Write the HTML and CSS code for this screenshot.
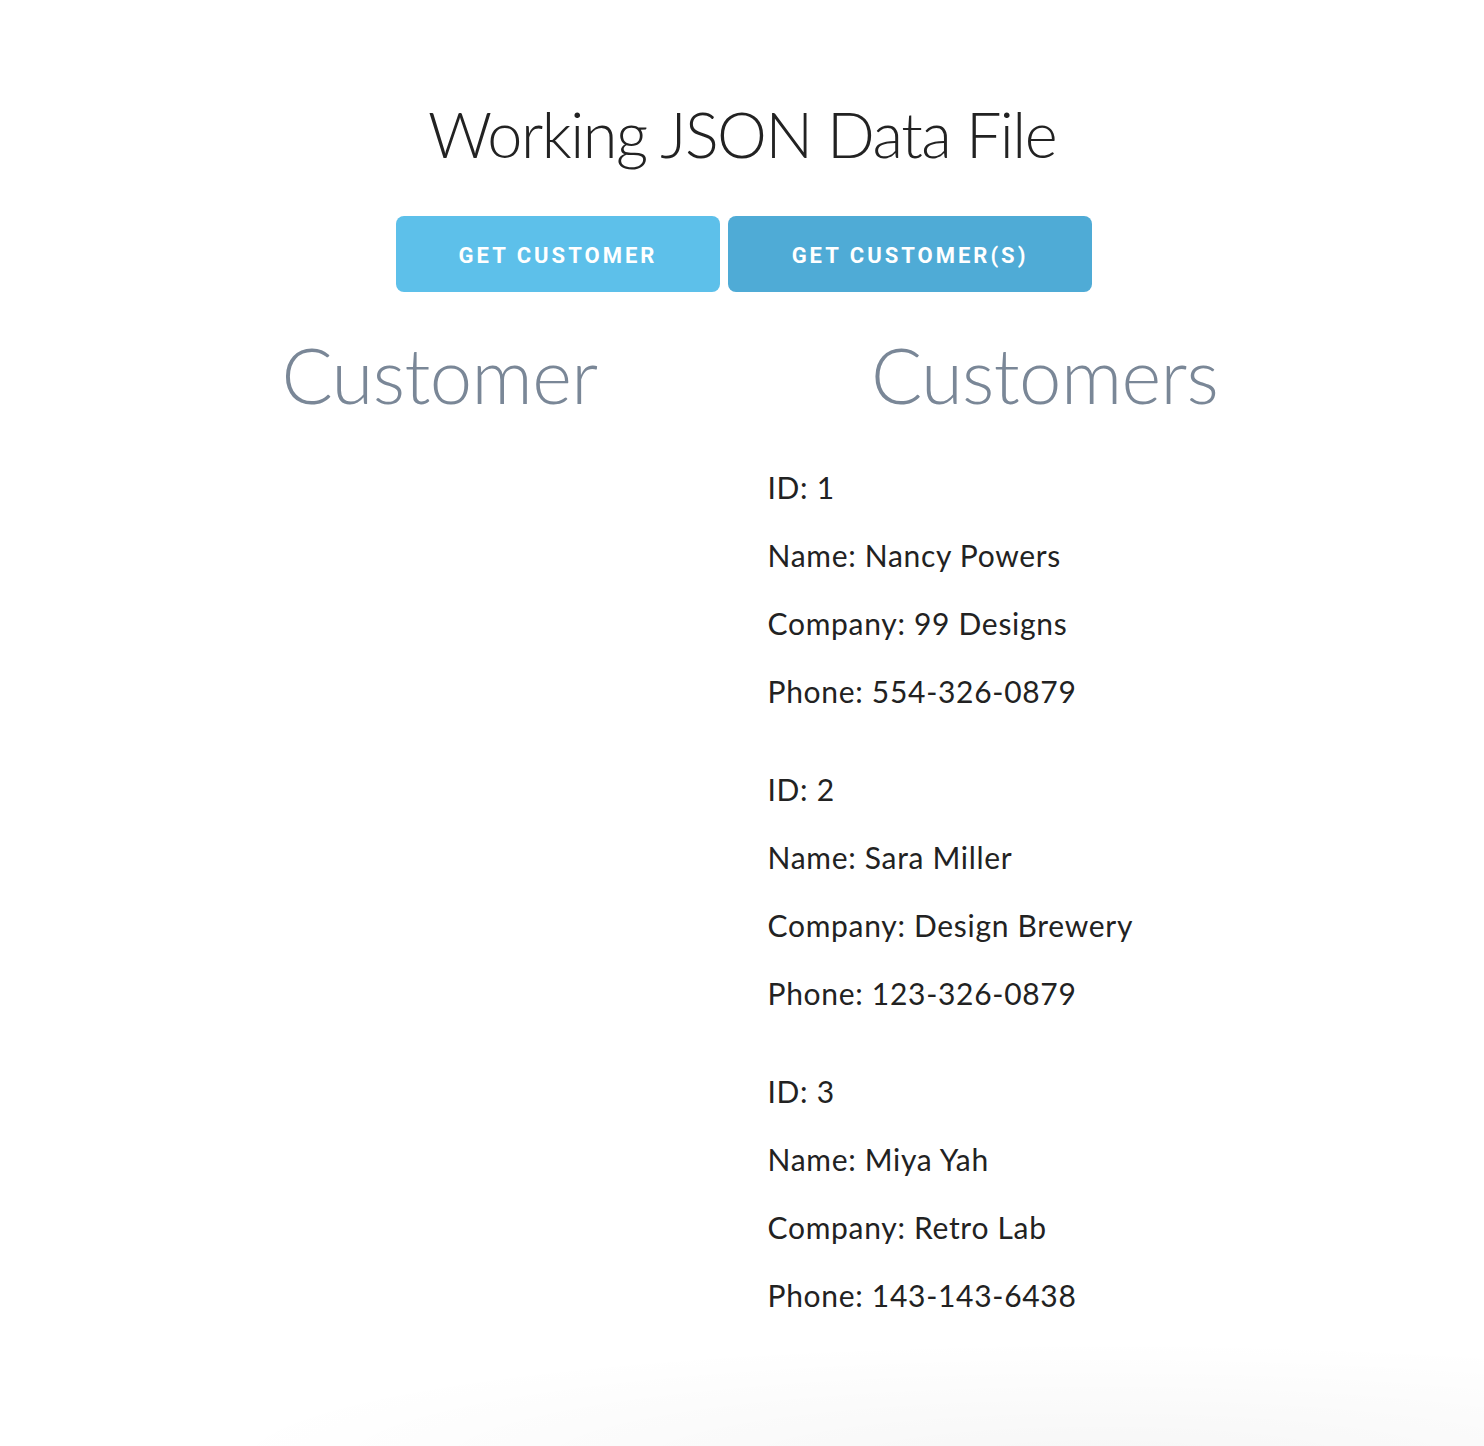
FILE: index.html
```html
<!DOCTYPE html>
<html lang="en">
<head>
    <meta charset="UTF-8">
    <meta name="viewport" content="width=device-width, initial-scale=1.0">
    <title>Working JSON Data File</title>
    <link rel="stylesheet" href="styles.css">
</head>
<body>
    <div class="container">
        <h1>Working JSON Data File</h1>
        <div class="buttons">
            <button id="button1" class="button button-one">Get Customer</button>
            <button id="button2" class="button button-two">Get Customer(s)</button>
        </div>
        <div class="row">
            <div class="column">
                <h2>Customer</h2>
                <div id="customer"></div>
            </div>
            <div class="column">
                <h2>Customers</h2>
                <div id="customers">
                    <ul class="customer-list">
                        <li>ID: 1</li>
                        <li>Name: Nancy Powers</li>
                        <li>Company: 99 Designs</li>
                        <li>Phone: 554-326-0879</li>
                    </ul>
                    <ul class="customer-list">
                        <li>ID: 2</li>
                        <li>Name: Sara Miller</li>
                        <li>Company: Design Brewery</li>
                        <li>Phone: 123-326-0879</li>
                    </ul>
                    <ul class="customer-list">
                        <li>ID: 3</li>
                        <li>Name: Miya Yah</li>
                        <li>Company: Retro Lab</li>
                        <li>Phone: 143-143-6438</li>
                    </ul>
                </div>
            </div>
        </div>
    </div>
</body>
</html>
```
FILE: styles.css
```css
* {
    box-sizing: border-box;
}
html, body {
    height: 100%;
}
body {
    font-family: Lato, 'Open Sans', sans-serif;
    font-weight: 400;
    margin: 0;
    padding: 0;
    color: #222222;
    background-color: #ffffff;
    background-image: radial-gradient(ellipse 900px 120px at 1100px 1460px, rgba(0,0,0,0.035), rgba(0,0,0,0) 100%);
    background-repeat: no-repeat;
}
.container {
    width: 1165px;
    margin: 0 auto;
    padding-top: 96px;
}
h1 {
    font-size: 63px;
    font-weight: 300;
    letter-spacing: -1.5px;
    text-align: center;
    margin: 0 0 44px;
    line-height: 1.2;
    color: #222222;
}
.buttons {
    display: flex;
    justify-content: center;
    gap: 8px;
    padding-left: 4px;
}
.button {
    height: 76px;
    padding: 4px 0 0;
    border: none;
    border-radius: 8px;
    font-family: Roboto, 'Liberation Sans', sans-serif;
    font-size: 22px;
    font-weight: 700;
    letter-spacing: 3px;
    text-transform: uppercase;
    color: #ffffff;
}
.button-one {
    width: 324px;
    background-color: #5dc0ea;
}
.button-two {
    width: 364px;
    background-color: #4fabd6;
}
.row {
    display: grid;
    grid-template-columns: 560px 560px;
    gap: 45px;
    margin-top: 37px;
}
h2 {
    font-size: 76px;
    font-weight: 300;
    letter-spacing: -0.6px;
    text-align: center;
    color: #7a8797;
    margin: 0 0 43px;
    line-height: 1.2;
}
.customer-list {
    list-style: none;
    margin: 0 0 50px;
    padding: 0 0 0 3px;
}
.customer-list li {
    font-size: 30px;
    letter-spacing: 0.7px;
    line-height: 48px;
    margin-bottom: 20px;
}
```
